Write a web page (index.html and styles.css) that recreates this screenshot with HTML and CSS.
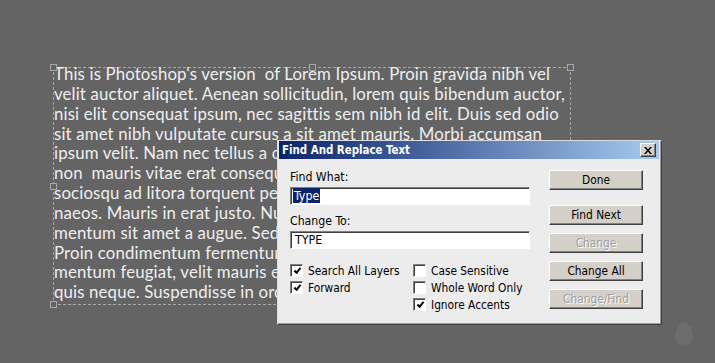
FILE: index.html
```html
<!DOCTYPE html>
<html lang="en">

<head>
    <meta charset="UTF-8">
    <title>Find And Replace Text</title>
    <link rel="stylesheet" href="styles.css">
</head>

<body>
    <div class="canvas">

        <!-- text frame on the document -->
        <div class="text-frame">
            <span class="handle h-tl"></span>
            <span class="handle h-tm"></span>
            <span class="handle h-tr"></span>
            <span class="handle h-ml"></span>
            <span class="handle h-bl"></span>
            <div class="lines">
                <div class="line">This is Photoshop's version&nbsp; of Lorem Ipsum. Proin gravida nibh vel</div>
                <div class="line">velit auctor aliquet. Aenean sollicitudin, lorem quis bibendum auctor,</div>
                <div class="line">nisi elit consequat ipsum, nec sagittis sem nibh id elit. Duis sed odio</div>
                <div class="line">sit amet nibh vulputate cursus a sit amet mauris. Morbi accumsan</div>
                <div class="line">ipsum velit. Nam nec tellus a odio tincidunt auctor a ornare odio. Sed</div>
                <div class="line">non&nbsp; mauris vitae erat consequat auctor eu in elit. Class aptent taciti</div>
                <div class="line">sociosqu ad litora torquent per conubia nostra, per inceptos hime-</div>
                <div class="line">naeos. Mauris in erat justo. Nullam ac urna eu felis dapibus condi-</div>
                <div class="line">mentum sit amet a augue. Sed non neque elit. Sed ut imperdiet nisi.</div>
                <div class="line">Proin condimentum fermentum nunc. Etiam pharetra, erat sed fer-</div>
                <div class="line">mentum feugiat, velit mauris egestas quam, ut aliquam massa nisl</div>
                <div class="line">quis neque. Suspendisse in orci enim.</div>
            </div>
        </div>

        <!-- find and replace dialog -->
        <div class="dialog">
            <div class="title-bar">
                <span class="title">Find And Replace Text</span>
                <button class="close-btn">
                    <svg width="8" height="7" viewBox="0 0 8 7">
                        <path d="M0 0h2l2 2.5L6 0h2L5 3.5 8 7H6L4 4.5 2 7H0l3-3.5z" fill="#000" />
                    </svg>
                </button>
            </div>

            <div class="dialog-body">
                <div class="fields">
                    <label class="field-label">Find What:</label>
                    <div class="text-input"><span class="selected">Type</span></div>

                    <label class="field-label second">Change To:</label>
                    <div class="text-input">TYPE</div>

                    <div class="options">
                        <div class="option"><span class="check on"></span>Search All Layers</div>
                        <div class="option"><span class="check"></span>Case Sensitive</div>
                        <div class="option"><span class="check on"></span>Forward</div>
                        <div class="option"><span class="check"></span>Whole Word Only</div>
                        <div class="option"></div>
                        <div class="option"><span class="check on"></span>Ignore Accents</div>
                    </div>
                </div>

                <div class="buttons">
                    <button class="btn done">Done</button>
                    <button class="btn">Find Next</button>
                    <button class="btn" disabled>Change</button>
                    <button class="btn">Change All</button>
                    <button class="btn" disabled>Change/Find</button>
                </div>
            </div>
        </div>

        <svg class="egg" width="22" height="26" viewBox="0 0 22 26">
            <path d="M10 2c-5 0-9 9-9 15 0 5 4 8 9 8s9-3 9-8c0-3-1-6-2-8l3-1-4-1C14 4 12 2 10 2z" fill="#6d6d6d" />
        </svg>
    </div>
</body>

</html>
```

FILE: styles.css
```css
body {
    margin: 0;
    padding: 0;
    background-color: #646464;
}

.canvas {
    position: relative;
    width: 715px;
    height: 363px;
    overflow: hidden;
}

/* text frame */

.text-frame {
    position: absolute;
    left: 53px;
    top: 67px;
    width: 518px;
    height: 238px;
    border: 1px dashed #a8a8a8;
    box-sizing: border-box;
    font-family: Lato, "Open Sans", sans-serif;
    font-size: 16.8px;
    letter-spacing: 0.15px;
    line-height: 19.85px;
    color: #efefef;
}

.lines {
    margin-top: -4px;
}

.line {
    white-space: nowrap;
}

.handle {
    position: absolute;
    width: 5px;
    height: 5px;
    border: 1px solid #a8a8a8;
    background-color: #646464;
}

.h-tl { left: -4px; top: -4px; }
.h-tm { left: 255px; top: -4px; }
.h-tr { right: -4px; top: -4px; }
.h-ml { left: -4px; top: 115px; }
.h-bl { left: -4px; bottom: -4px; }

/* dialog */

.dialog {
    position: absolute;
    left: 277px;
    top: 140px;
    width: 385px;
    height: 185px;
    box-sizing: border-box;
    border: 1px solid;
    border-color: #dcdcdc #404040 #404040 #dcdcdc;
    box-shadow: inset -1px -1px 0 #9a9a9a;
    background-color: #ececec;
    padding: 0 2px 0 1px;
    font-family: "DejaVu Sans Condensed", "DejaVu Sans", sans-serif;
    font-size: 11.8px;
    color: #000;
}

.title-bar {
    display: flex;
    align-items: center;
    justify-content: space-between;
    height: 18px;
    padding: 0 3px 0 3px;
    background: linear-gradient(to right, #0a246a, #a6caf0);
}

.title {
    color: #fff;
    font-weight: bold;
    font-size: 11.4px;
}

.close-btn {
    width: 16px;
    height: 14px;
    padding: 0;
    display: flex;
    align-items: center;
    justify-content: center;
    background-color: #d4d0c8;
    border: 1px solid;
    border-color: #fff #404040 #404040 #fff;
    box-shadow: inset -1px -1px 0 #808080;
}

.dialog-body {
    display: flex;
    justify-content: space-between;
    padding: 11px 16px 0 11px;
}

.fields {
    width: 240px;
}

.field-label {
    display: block;
    height: 14px;
    line-height: 14px;
    font-size: 12.2px;
}

.field-label.second {
    margin-top: 9px;
}

.text-input {
    margin-top: 3px;
    height: 18px;
    box-sizing: border-box;
    border: 1px solid;
    border-color: #808080 #fff #fff #808080;
    box-shadow: inset 1px 1px 0 #404040;
    background-color: #fff;
    padding: 0 4px;
    line-height: 16px;
    font-size: 12.4px;
}

.selected {
    display: inline-block;
    margin-left: -2px;
    padding: 0 1px;
    background-color: #0a246a;
    color: #fff;
    line-height: 15px;
}

.options {
    display: grid;
    grid-template-columns: 123px auto;
    margin-top: 13px;
    width: 260px;
}

.option {
    display: flex;
    align-items: center;
    height: 17px;
    white-space: nowrap;
}

.check {
    width: 13px;
    height: 13px;
    box-sizing: border-box;
    margin-right: 5px;
    border: 1px solid;
    border-color: #808080 #fff #fff #808080;
    box-shadow: inset 1px 1px 0 #404040;
    background-color: #fff;
    position: relative;
}

.check.on::after {
    content: "";
    position: absolute;
    left: 2px;
    top: 2px;
    width: 5px;
    height: 2px;
    border-left: 2px solid #000;
    border-bottom: 2px solid #000;
    transform: translate(1px, 1px) rotate(-50deg);
}

.buttons {
    display: flex;
    flex-direction: column;
    gap: 8px;
}

.btn {
    width: 94px;
    height: 20px;
    padding: 0;
    font-family: "DejaVu Sans Condensed", "DejaVu Sans", sans-serif;
    font-size: 11.8px;
    color: #000;
    background-color: #d4d0c8;
    border: 1px solid;
    border-color: #fff #404040 #404040 #fff;
    box-shadow: inset -1px -1px 0 #808080;
}

.btn.done {
    margin-bottom: 7px;
}

.btn:disabled {
    color: #a0a0a0;
    text-shadow: 1px 1px 0 #fff;
}

.egg {
    position: absolute;
    left: 674px;
    top: 320px;
}
```
